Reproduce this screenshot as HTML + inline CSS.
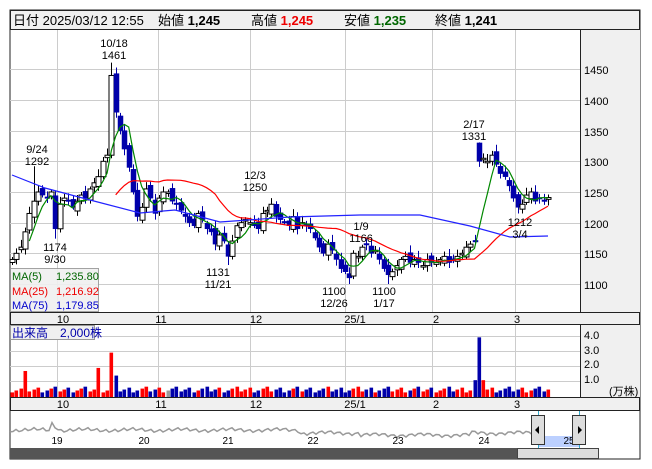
<!DOCTYPE html>
<html><head><meta charset="utf-8">
<style>
body{margin:0;background:#fff;width:652px;height:469px;overflow:hidden;font-family:"Liberation Sans","Noto Sans CJK JP",sans-serif}
svg{position:absolute;left:0;top:0}
</style></head><body>
<svg id="s" width="652" height="469" xmlns="http://www.w3.org/2000/svg" font-family="Liberation Sans, Noto Sans CJK JP, sans-serif">
<rect x="10" y="10" width="630" height="449" fill="#fff" stroke="#222"/>
<rect x="10.5" y="10.5" width="629" height="19" fill="#f0f0f0" stroke="#222"/>
<text y="25" font-size="13" fill="#000"><tspan x="13">日付 2025/03/12 12:55</tspan><tspan x="158">始値 </tspan><tspan font-weight="bold">1,245</tspan><tspan x="251">高値 </tspan><tspan font-weight="bold" fill="#e00">1,245</tspan><tspan x="344">安値 </tspan><tspan font-weight="bold" fill="#060">1,235</tspan><tspan x="435">終値 </tspan><tspan font-weight="bold">1,241</tspan></text>
<rect x="580" y="30" width="60" height="282" fill="#f0f0f0"/>
<rect x="580" y="325" width="60" height="72" fill="#f0f0f0"/>
<g id="grid" stroke="#ccc" stroke-width="1"></g>
<line x1="580.5" y1="30" x2="580.5" y2="312" stroke="#222"/>
<line x1="580.5" y1="325" x2="580.5" y2="397" stroke="#222"/>
<rect x="10.5" y="312.5" width="629" height="12" fill="#f0f0f0" stroke="#222"/>
<rect x="10.5" y="397.5" width="629" height="13" fill="#f0f0f0" stroke="#222"/>
<g font-size="11" fill="#000" id="mlab"></g>
<g id="ch"></g>
<g font-size="11" fill="#000" text-anchor="middle">
<text x="114" y="47">10/18</text><text x="114" y="59">1461</text>
<text x="37" y="153">9/24</text><text x="37" y="165">1292</text>
<text x="55" y="251">1174</text><text x="55" y="263">9/30</text>
<text x="218" y="276">1131</text><text x="218" y="288">11/21</text>
<text x="255" y="179">12/3</text><text x="255" y="191">1250</text>
<text x="361" y="230">1/9</text><text x="361" y="242">1166</text>
<text x="334" y="295">1100</text><text x="334" y="307">12/26</text>
<text x="384" y="295">1100</text><text x="384" y="307">1/17</text>
<text x="474" y="128">2/17</text><text x="474" y="140">1331</text>
<text x="520" y="226">1212</text><text x="520" y="238">3/4</text>
</g>
<g font-size="11" fill="#000"><text x="584" y="74">1450</text><text x="584" y="105">1400</text><text x="584" y="136">1350</text><text x="584" y="166">1300</text><text x="584" y="197">1250</text><text x="584" y="228">1200</text><text x="584" y="258">1150</text><text x="584" y="289">1100</text>
<text x="584" y="339">4.0</text><text x="584" y="354">3.0</text><text x="584" y="368">2.0</text><text x="584" y="383">1.0</text><text x="609" y="395">(万株)</text></g>
<rect x="10.5" y="268.5" width="88" height="43" fill="#f0f0f0" stroke="#999" opacity="0.9"/>
<g font-size="11"><text x="12" y="280" fill="#060">MA(5)</text><text x="56" y="280" fill="#060">1,235.80</text>
<text x="12" y="295" fill="#e00">MA(25)</text><text x="56" y="295" fill="#e00">1,216.92</text>
<text x="12" y="309" fill="#00c">MA(75)</text><text x="56" y="309" fill="#00c">1,179.85</text></g>
<rect x="10.5" y="325.5" width="84" height="14" fill="#f0f0f0" stroke="#999"/>
<text x="12" y="337" font-size="12" fill="#00a">出来高　2,000株</text>
<g id="nav"></g>
<rect x="10" y="448" width="508" height="11" fill="#555"/>
<rect x="517.5" y="448.5" width="81" height="10" fill="#ddd" stroke="#444"/>
</svg>
<script>
var S=document.getElementById('s'),NS='http://www.w3.org/2000/svg';
function el(p,t,a){var e=document.createElementNS(NS,t);for(var k in a)e.setAttribute(k,a[k]);p.appendChild(e);return e;}
var G=document.getElementById('grid');
[57.5,158.5,250.5,345.5,432.5,515.5].forEach(function(x){el(G,'line',{x1:x,y1:30,x2:x,y2:312});el(G,'line',{x1:x,y1:325,x2:x,y2:397});});
function py(p){return 100+(1400-p)*0.6133;}
[1450,1400,1350,1300,1250,1200,1150,1100].forEach(function(p){var y=Math.round(py(p))+.5;el(G,'line',{x1:10,y1:y,x2:580,y2:y});});
[336,351,366,381].forEach(function(y){el(G,'line',{x1:10,y1:y+.5,x2:580,y2:y+.5});});
var ML=document.getElementById('mlab');
[[63,'10'],[161,'11'],[256,'12'],[355,'25/1'],[436,'2'],[517,'3']].forEach(function(m){
 el(ML,'text',{x:m[0],y:323,'text-anchor':'middle'}).textContent=m[1];
 el(ML,'text',{x:m[0],y:408,'text-anchor':'middle'}).textContent=m[1];});
var C=[1140,1150,1160,1185,1215,1235,1250,1245,1240,1250,1190,1230,1240,1235,1225,1235,1245,1240,1255,1265,1275,1300,1310,1440,1380,1350,1320,1290,1250,1210,1225,1255,1240,1215,1240,1250,1250,1235,1230,1220,1210,1200,1195,1215,1205,1190,1185,1165,1180,1170,1145,1170,1195,1200,1205,1200,1195,1190,1215,1220,1230,1210,1205,1200,1195,1210,1190,1200,1195,1190,1175,1160,1150,1165,1155,1140,1125,1120,1110,1150,1145,1160,1165,1150,1155,1140,1125,1115,1120,1130,1140,1145,1135,1140,1135,1130,1140,1135,1135,1140,1145,1135,1140,1145,1150,1160,1165,1170,1300,1305,1300,1310,1295,1280,1275,1260,1240,1225,1230,1245,1250,1235,1240,1235,1241];
var n=C.length,dx=(548-12)/(n-1),CH=document.getElementById('ch');
for(var i=0;i<n;i++){var x=12+i*dx,c=C[i],o=i?C[i-1]+((i*7)%5-2)*3:1135;
 if(i==23)o=1310;if(i==108)o=1330;
 var hi=Math.max(o,c)+4+(i*13%9),lo=Math.min(o,c)-4-(i*11%7);
 if(i==23)hi=1461;if(i==5)hi=1292;if(i==10)lo=1174;if(i==50)lo=1131;if(i==78)lo=1100;if(i==87)lo=1100;if(i==108)hi=1331;
 var up=c>=o,xc=Math.round(x)+.5;
 el(CH,'line',{x1:xc,y1:py(hi),x2:xc,y2:py(lo),stroke:up?'#000':'#00a'});
 var t=py(Math.max(o,c)),b=py(Math.min(o,c));if(b-t<1.5)b=t+1.5;
 el(CH,'rect',{x:xc-2.5,y:t,width:5,height:b-t,fill:up?'#fff':'#00a',stroke:up?'#000':'#00a','stroke-width':up?1:0.5});
 var v=0.3+((i*37)%7)/16;if(i==20)v=1.9;if(i==23)v=2.9;if(i==24)v=1.4;if(i==108)v=3.9;if(i==109)v=1.1;if(i==107)v=1.1;if(i==3)v=1.7;
 var h=v*15.3;el(CH,'rect',{x:xc-2,y:397-h,width:3.6,height:h,fill:(o==c)?'#999':(up?'#f00':'#00a')});}
function ma(k){var p=[];for(var i=k-1;i<n;i++){var s=0;for(var j=0;j<k;j++)s+=C[i-j];p.push((12+i*dx).toFixed(1)+','+py(s/k).toFixed(1));}return p.join(' ');}
el(CH,'polyline',{points:ma(5),fill:'none',stroke:'#080','stroke-width':1.2});
el(CH,'polyline',{points:ma(25),fill:'none',stroke:'#f00','stroke-width':1.2});
el(CH,'polyline',{points:'12,175 45,188 90,200 140,213 175,210 220,222 290,217 360,215 420,215 470,226 510,237 548,236',fill:'none',stroke:'#22f','stroke-width':1.2});
var N=document.getElementById('nav');
el(N,'rect',{x:538,y:436,width:41,height:11,fill:'#bcd0ff'});
var pts=[];for(var x=10;x<=538;x+=3){var y=430+Math.sin(x*0.7)*1.5+Math.sin(x*0.13);if(x>50&&x<60)y-=(60-x)*0.8;if(x>300)y+=3;if(x>360&&x<470)y+=2;pts.push(x+','+y.toFixed(1));}
el(N,'polyline',{points:pts.join(' '),fill:'none',stroke:'#999','stroke-width':1.5});
el(N,'line',{x1:538.5,y1:411,x2:538.5,y2:448,stroke:'#3ac'});el(N,'line',{x1:579.5,y1:411,x2:579.5,y2:448,stroke:'#3ac'});
[[57,'19'],[144,'20'],[228,'21'],[313,'22'],[398,'23'],[484,'24'],[569,'25']].forEach(function(m){el(N,'text',{x:m[0],y:444,'font-size':10,'text-anchor':'middle'}).textContent=m[1];});
el(N,'rect',{x:531.5,y:415.5,width:13,height:29,fill:'#ddd',stroke:'#333'});
el(N,'rect',{x:572.5,y:415.5,width:13,height:29,fill:'#ddd',stroke:'#333'});
el(N,'path',{d:'M535,430 L539,426 L539,434Z',fill:'#000'});
el(N,'path',{d:'M582,430 L578,426 L578,434Z',fill:'#000'});
</script>
</body></html>
